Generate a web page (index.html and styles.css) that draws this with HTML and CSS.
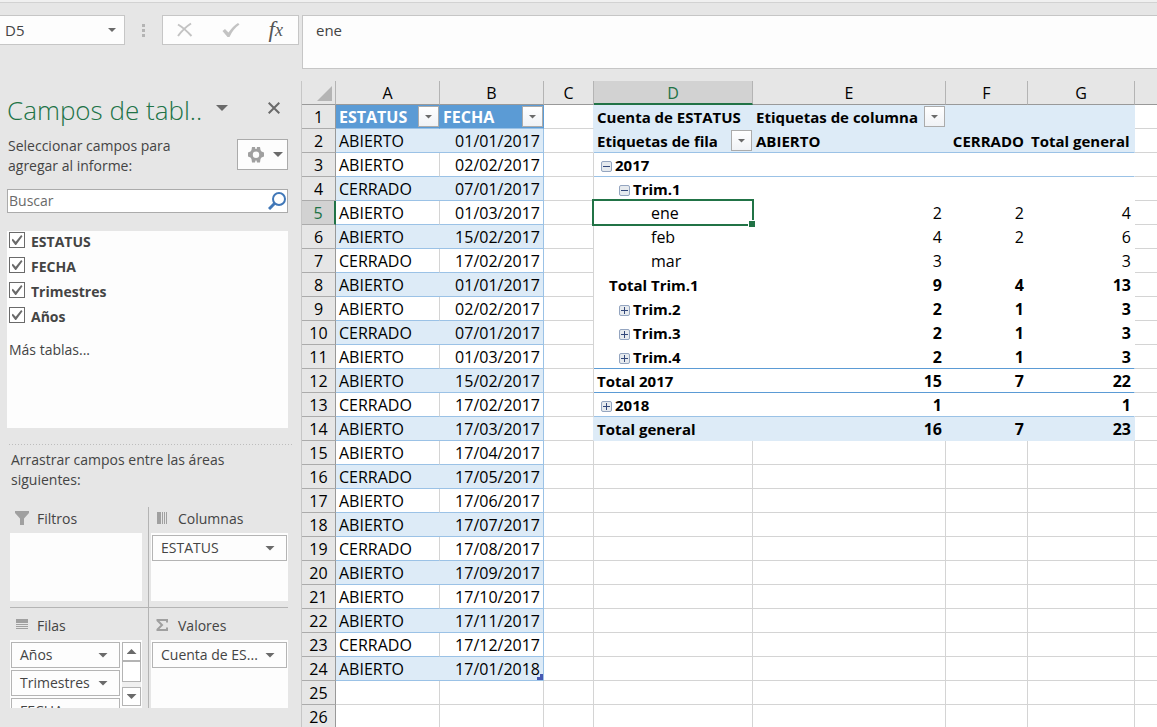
FILE: index.html
```html
<!DOCTYPE html>
<html lang="es">
<head>
<meta charset="utf-8">
<meta name="viewport" content="width=device-width, initial-scale=1">
<title>Tabla dinámica</title>
<link rel="stylesheet" href="styles.css">
</head>
<body>
<header class="formula-bar">
  <div class="name-area">
    <div class="name-box"><input class="name-input" type="text" value="D5" aria-label="Cuadro de nombres"><button class="plain name-drop" aria-label="Nombres"><span class="caret"></span></button></div>
    <div class="grip"><i></i><i></i><i></i></div>
    <div class="formula-tools">
      <button class="plain" aria-label="Cancelar"><svg width="18" height="16" viewBox="0 0 18 16"><path d="M2 2.500Q8 6 15.500 14M15 1.500Q8 6 2 14" fill="none" stroke="#c3c3c3" stroke-width="2"/></svg></button>
      <button class="plain" aria-label="Introducir"><svg width="18" height="16" viewBox="0 0 18 16"><path d="M0.500 9L3 7L6.500 10.500Q11 4 16 1L17.500 2.500Q11 7 7.500 15H5.500Z" fill="#c3c3c3"/></svg></button>
      <button class="plain fx" aria-label="Insertar función"><span class="fx-f">f</span><span class="fx-x">x</span></button>
    </div>
  </div>
  <input class="formula-input" type="text" value="ene" aria-label="Barra de fórmulas">
</header>
<main class="workspace">
  <aside class="pane">
    <div class="pane-head">
      <h1 class="pane-title">Campos de tabl..</h1>
      <button class="plain pane-menu" aria-label="Opciones del panel"><span class="caret caret-lg"></span></button>
      <button class="plain pane-close" aria-label="Cerrar"><svg width="12" height="12" viewBox="0 0 12 12"><path d="M0.700 0.700L11.300 11.300M11.300 0.700L0.700 11.300" stroke="#6a6a6a" stroke-width="2"/></svg></button>
    </div>
    <div class="choose">
      <p class="hint">Seleccionar campos para agregar al informe:</p>
      <button class="tools" aria-label="Herramientas"><svg width="18" height="18" viewBox="0 0 18 18"><path fill="#a0a0a0" fill-rule="evenodd" d="M5 1H8L8.400 3H9.600L10 1H13L13.500 4L14.500 5.500L17 6.500V10.500L14.500 11.500L13.500 13L13 16.500H10L9.500 14.500H8.500L8 16.500H5L4.500 13L3.500 11.500L1 10.500V6.500L3.500 5.500L4.500 4ZM9 5.500A3.200 3.200 0 1 0 9 11.900A3.200 3.200 0 1 0 9 5.500Z"/></svg><span class="caret"></span></button>
    </div>
    <div class="search"><input class="search-input" type="text" placeholder="Buscar" aria-label="Buscar"><svg width="18" height="18" viewBox="0 0 18 18" fill="none" stroke="#4178b8"><circle cx="11" cy="7" r="6" stroke-width="2"/><path d="M7 11L1 17" stroke-width="3"/></svg></div>
    <div class="fields">
      <label class="field"><input class="check" type="checkbox" checked>ESTATUS</label>
      <label class="field"><input class="check" type="checkbox" checked>FECHA</label>
      <label class="field"><input class="check" type="checkbox" checked>Trimestres</label>
      <label class="field"><input class="check" type="checkbox" checked>Años</label>
      <a class="more" href="#">Más tablas...</a>
    </div>
    <p class="hint drag-hint">Arrastrar campos entre las áreas siguientes:</p>
    <div class="areas">
      <section class="area area-left area-top">
        <h2 class="area-title"><svg width="14" height="14" viewBox="0 0 14 14"><path d="M0 0H14V2L9 7.500V14H5V7.500L0 2Z" fill="#a0a0a0"/></svg>Filtros</h2>
        <div class="drop"></div>
      </section>
      <section class="area area-right area-top">
        <h2 class="area-title"><svg width="12" height="12" viewBox="0 0 12 12"><path d="M1 0H5V12H1ZM6 0H7V12H6ZM8 0H9V12H8ZM10 0H11V12H10Z" fill="#a0a0a0"/></svg>Columnas</h2>
        <div class="drop"><button class="chip">ESTATUS<span class="caret"></span></button></div>
      </section>
      <section class="area area-left area-bottom">
        <h2 class="area-title"><svg width="14" height="12" viewBox="0 0 14 12"><path d="M1 0H13V4H1ZM1 5H13V6H1ZM1 7H13V8H1ZM1 9H13V10H1Z" fill="#a0a0a0"/></svg>Filas</h2>
        <div class="drop drop-scroll">
          <div class="chips">
            <button class="chip">Años<span class="caret"></span></button>
            <button class="chip">Trimestres<span class="caret"></span></button>
            <button class="chip">FECHA<span class="caret"></span></button>
          </div>
          <div class="scroll"><button class="scroll-btn" aria-label="Subir"><span class="caret caret-up"></span></button><div class="thumb"></div><button class="scroll-btn scroll-down" aria-label="Bajar"><span class="caret"></span></button></div>
        </div>
      </section>
      <section class="area area-right area-bottom">
        <h2 class="area-title"><svg width="12" height="12" viewBox="0 0 12 12"><path d="M0.500 1H11V3.500M1 1L6 6L1 11M0.500 11H11V8.500" fill="none" stroke="#a0a0a0" stroke-width="2"/></svg>Valores</h2>
        <div class="drop"><button class="chip">Cuenta de ES...<span class="caret"></span></button></div>
      </section>
    </div>
  </aside>
  <div class="sheet">
    <table class="grid">
      <colgroup><col class="w-n"><col class="w-ab"><col class="w-ab"><col class="w-c"><col class="w-d"><col class="w-e"><col class="w-f"><col class="w-g"><col></colgroup>
      <thead><tr><th class="corner"><svg width="17" height="17" viewBox="0 0 17 17"><path d="M16 1V16H1Z" fill="#b4b4b4"/></svg></th><th>A</th><th>B</th><th>C</th><th class="active-col">D</th><th>E</th><th>F</th><th>G</th><th></th></tr></thead>
      <tbody>
        <tr class="t-head p-fill"><th scope="row">1</th><td><div class="cell">ESTATUS<button class="filter" aria-label="Filtrar ESTATUS"><span class="caret caret-sm"></span></button></div></td><td><div class="cell">FECHA<button class="filter" aria-label="Filtrar FECHA"><span class="caret caret-sm"></span></button></div></td><td></td><td>Cuenta de ESTATUS</td><td class="text"><div class="cell">Etiquetas de columna<button class="filter" aria-label="Filtrar columnas"><span class="caret caret-sm"></span></button></div></td><td></td><td></td><td></td></tr>
        <tr class="band p-fill line"><th scope="row">2</th><td>ABIERTO</td><td>01/01/2017</td><td></td><td><div class="cell">Etiquetas de fila<button class="filter" aria-label="Filtrar filas"><span class="caret caret-sm"></span></button></div></td><td class="text">ABIERTO</td><td>CERRADO</td><td class="caption">Total general</td><td></td></tr>
        <tr class="data p line bold"><th scope="row">3</th><td>ABIERTO</td><td>02/02/2017</td><td></td><td class="lv0"><button class="toggle minus" aria-label="Contraer"></button>2017</td><td></td><td></td><td></td><td></td></tr>
        <tr class="band p bold"><th scope="row">4</th><td>CERRADO</td><td>07/01/2017</td><td></td><td class="lv1"><button class="toggle minus" aria-label="Contraer"></button>Trim.1</td><td></td><td></td><td></td><td></td></tr>
        <tr class="data p active-row"><th scope="row">5</th><td>ABIERTO</td><td>01/03/2017</td><td></td><td class="lv2 selected">ene</td><td>2</td><td>2</td><td>4</td><td></td></tr>
        <tr class="band p"><th scope="row">6</th><td>ABIERTO</td><td>15/02/2017</td><td></td><td class="lv2">feb</td><td>4</td><td>2</td><td>6</td><td></td></tr>
        <tr class="data p"><th scope="row">7</th><td>CERRADO</td><td>17/02/2017</td><td></td><td class="lv2">mar</td><td>3</td><td></td><td>3</td><td></td></tr>
        <tr class="band p bold"><th scope="row">8</th><td>ABIERTO</td><td>01/01/2017</td><td></td><td class="sub">Total Trim.1</td><td>9</td><td>4</td><td>13</td><td></td></tr>
        <tr class="data p bold"><th scope="row">9</th><td>ABIERTO</td><td>02/02/2017</td><td></td><td class="lv1"><button class="toggle plus" aria-label="Expandir"></button>Trim.2</td><td>2</td><td>1</td><td>3</td><td></td></tr>
        <tr class="band p bold"><th scope="row">10</th><td>CERRADO</td><td>07/01/2017</td><td></td><td class="lv1"><button class="toggle plus" aria-label="Expandir"></button>Trim.3</td><td>2</td><td>1</td><td>3</td><td></td></tr>
        <tr class="data p bold line-strong"><th scope="row">11</th><td>ABIERTO</td><td>01/03/2017</td><td></td><td class="lv1"><button class="toggle plus" aria-label="Expandir"></button>Trim.4</td><td>2</td><td>1</td><td>3</td><td></td></tr>
        <tr class="band p bold line-strong"><th scope="row">12</th><td>ABIERTO</td><td>15/02/2017</td><td></td><td>Total 2017</td><td>15</td><td>7</td><td>22</td><td></td></tr>
        <tr class="data p bold line"><th scope="row">13</th><td>CERRADO</td><td>17/02/2017</td><td></td><td class="lv0"><button class="toggle plus" aria-label="Expandir"></button>2018</td><td>1</td><td></td><td>1</td><td></td></tr>
        <tr class="band p-fill"><th scope="row">14</th><td>ABIERTO</td><td>17/03/2017</td><td></td><td>Total general</td><td>16</td><td>7</td><td>23</td><td></td></tr>
        <tr class="data"><th scope="row">15</th><td>ABIERTO</td><td>17/04/2017</td><td></td><td></td><td></td><td></td><td></td><td></td></tr>
        <tr class="band"><th scope="row">16</th><td>CERRADO</td><td>17/05/2017</td><td></td><td></td><td></td><td></td><td></td><td></td></tr>
        <tr class="data"><th scope="row">17</th><td>ABIERTO</td><td>17/06/2017</td><td></td><td></td><td></td><td></td><td></td><td></td></tr>
        <tr class="band"><th scope="row">18</th><td>ABIERTO</td><td>17/07/2017</td><td></td><td></td><td></td><td></td><td></td><td></td></tr>
        <tr class="data"><th scope="row">19</th><td>CERRADO</td><td>17/08/2017</td><td></td><td></td><td></td><td></td><td></td><td></td></tr>
        <tr class="band"><th scope="row">20</th><td>ABIERTO</td><td>17/09/2017</td><td></td><td></td><td></td><td></td><td></td><td></td></tr>
        <tr class="data"><th scope="row">21</th><td>ABIERTO</td><td>17/10/2017</td><td></td><td></td><td></td><td></td><td></td><td></td></tr>
        <tr class="band"><th scope="row">22</th><td>ABIERTO</td><td>17/11/2017</td><td></td><td></td><td></td><td></td><td></td><td></td></tr>
        <tr class="data"><th scope="row">23</th><td>CERRADO</td><td>17/12/2017</td><td></td><td></td><td></td><td></td><td></td><td></td></tr>
        <tr class="band"><th scope="row">24</th><td>ABIERTO</td><td class="table-end">17/01/2018</td><td></td><td></td><td></td><td></td><td></td><td></td></tr>
        <tr><th scope="row">25</th><td></td><td></td><td></td><td></td><td></td><td></td><td></td><td></td></tr>
        <tr><th scope="row">26</th><td></td><td></td><td></td><td></td><td></td><td></td><td></td><td></td></tr>
      </tbody>
    </table>
  </div>
</main>
</body>
</html>
```

FILE: styles.css
```css
:root {
  --chrome: #e6e6e6;
  --edge: #c6c6c6;
  --field: #fdfdfd;
  --text: #444;
  --green: #217346;
  --fill: #ddebf7;
  --blue-line: #9bc2e6;
  --blue: #5b9bd5;
  --gridline: #d4d4d4;
}

* { box-sizing: border-box; }

body {
  margin: 0;
  height: 100vh;
  overflow: hidden;
  display: flex;
  flex-direction: column;
  background: var(--chrome);
  color: var(--text);
  font: 14px/20px "Open Sans", "Noto Sans", sans-serif;
}

button, input { font: inherit; color: inherit; }
button { padding: 0; }
p, h1, h2 { margin: 0; font-weight: 400; }
svg { display: block; flex: none; }

.plain {
  border: 0;
  background: none;
  display: flex;
  align-items: center;
  justify-content: center;
}

.caret {
  flex: none;
  width: 10px;
  height: 5px;
  background: #6a6a6a;
  clip-path: polygon(0 0, 100% 0, 50% 100%);
}
.caret-lg { width: 12px; height: 6px; }
.caret-sm { width: 8px; height: 4px; }
.caret-up { clip-path: polygon(50% 0, 100% 100%, 0 100%); }

/* Formula bar */
.formula-bar {
  flex: none;
  display: flex;
  align-items: flex-start;
  height: 81px;
  padding-top: 12px;
  border-top: 2px solid #f0f0f0;
  box-shadow: inset 0 1px #d2d2d2;
  font-size: 15px;
}
.name-area { flex: none; display: flex; width: 302px; padding: 1px 3px 0 0; }
.name-box {
  display: flex;
  width: 125px;
  height: 30px;
  background: var(--field);
  border: 1px solid var(--edge);
  border-left: 0;
}
.name-input { flex: 1; min-width: 0; border: 0; background: none; padding: 0 5px; }
.name-drop { width: 24px; }
.name-drop .caret { width: 8px; height: 4px; }
.grip {
  flex: 1;
  display: flex;
  flex-direction: column;
  align-items: center;
  justify-content: center;
  gap: 2px;
}
.grip i { width: 3px; height: 3px; background: #b4b4b4; }
.formula-tools {
  display: flex;
  align-items: center;
  justify-content: space-between;
  width: 137px;
  height: 30px;
  padding: 0 15px 0 13px;
  background: var(--field);
  border: 1px solid var(--edge);
}
.fx { font: italic 400 23px/20px "Liberation Serif", serif; color: #555; }
.fx-x { font-size: 18px; }
.formula-input {
  flex: 1;
  min-width: 0;
  height: 54px;
  margin-top: 1px;
  padding: 0 13px 24px;
  background: var(--field);
  border: 1px solid var(--edge);
  border-right: 0;
}

.workspace { flex: 1; min-height: 0; display: flex; }

/* Field pane */
.pane { flex: none; width: 301px; padding: 10px 13px 0 7px; }
.pane-head { display: flex; align-items: center; height: 38px; }
.pane-title {
  flex: 1;
  font-size: 26px;
  line-height: 38px;
  font-weight: 300;
  color: var(--green);
  white-space: nowrap;
}
.pane-menu { width: 20px; height: 20px; margin-bottom: 4px; }
.pane-close { width: 28px; height: 20px; margin: 0 0 4px 28px; }
.choose {
  display: flex;
  justify-content: space-between;
  align-items: flex-start;
  padding: 7px 0 0 1px;
}
.hint { width: 190px; }
.tools {
  display: flex;
  align-items: center;
  justify-content: space-between;
  width: 51px;
  height: 31px;
  margin-top: 3px;
  padding: 0 4px 0 9px;
  background: var(--field);
  border: 1px solid #ababab;
}
.search {
  display: flex;
  align-items: center;
  height: 24px;
  margin-top: 13px;
  padding: 0 1px;
  background: #fff;
  border: 1px solid #ababab;
}
.search-input { flex: 1; min-width: 0; height: 20px; padding: 0; border: 0; background: none; outline: 0; }
.search-input::placeholder { color: #6a6a6a; opacity: 1; }
.fields {
  height: 197px;
  margin-top: 18px;
  padding: 0 2px;
  background: var(--field);
}
.field {
  display: flex;
  align-items: center;
  gap: 6px;
  height: 25px;
  padding-bottom: 4px;
  font-weight: 700;
  line-height: 20px;
}
.check {
  appearance: none;
  display: grid;
  place-items: center;
  width: 16px;
  height: 16px;
  margin: 0 0 3px;
  border: 1px solid #6a6a6a;
  background: #fff;
}
.check:checked::after {
  content: "";
  width: 11px;
  height: 10px;
  background: #6a6a6a;
  clip-path: polygon(0 50%, 12% 38%, 38% 68%, 88% 0, 100% 12%, 42% 100%, 34% 100%);
}
.more { display: block; margin-top: 9px; color: inherit; text-decoration: none; }
.drag-hint {
  width: auto;
  margin: 16px -5px 0 2px;
  padding: 6px 45px 0 2px;
  background: repeating-linear-gradient(90deg, #bdbdbd 0 1px, transparent 1px 3px) top / 100% 1px no-repeat;
}
.areas { display: grid; grid-template-columns: 139px 1fr; margin: 17px 0 0 3px; }
.area { min-width: 0; }
.area-left { padding-right: 6px; border-right: 1px solid #b4b4b4; }
.area-right { padding-left: 2px; }
.area-top { padding-bottom: 6px; border-bottom: 1px solid #b4b4b4; }
.area-bottom { padding-top: 6px; }
.area-title { display: flex; align-items: center; gap: 8px; height: 26px; padding: 0 5px 2px; font-size: 14px; }
.area-title svg { margin-bottom: 2px; }
.area-right .area-title { gap: 10px; }
.drop { height: 68px; padding: 2px 1px 0; overflow: hidden; background: var(--field); }
.drop-scroll { display: flex; justify-content: space-between; }
.chips { width: 109px; }
.chip {
  display: flex;
  align-items: center;
  justify-content: space-between;
  width: 100%;
  height: 26px;
  margin-bottom: 2px;
  padding: 0 11px 0 8px;
  background: var(--field);
  border: 1px solid #b4b4b4;
  white-space: nowrap;
}
.scroll { width: 19px; height: 64px; display: flex; flex-direction: column; background: #f0f0f0; }
.scroll-btn, .thumb {
  display: grid;
  place-items: center;
  width: 19px;
  height: 19px;
  background: #fff;
  border: 1px solid #b4b4b4;
}
.thumb { height: 21px; }
.scroll-down { margin-top: auto; }

/* Worksheet */
.sheet { flex: 1; min-width: 0; overflow: hidden; border-left: 1px solid var(--edge); }
.grid {
  width: 100%;
  table-layout: fixed;
  border-collapse: separate;
  border-spacing: 0;
  color: #000;
  font: 16px/20px "Open Sans", "Noto Sans", sans-serif;
}
.w-n { width: 34px; }
.w-ab { width: 104px; }
.w-c { width: 50px; }
.w-d { width: 159px; }
.w-e { width: 193px; }
.w-f { width: 82px; }
.w-g { width: 107px; }
.grid th {
  height: 24px;
  padding: 0;
  background: var(--chrome);
  border-right: 1px solid #b4b4b4;
  border-bottom: 1px solid #ababab;
  font-weight: 400;
}
.grid thead th { border-bottom-color: #999; }
.grid tbody th { border-right-color: #999; }
.grid .corner svg { margin: 2px 2px 0 auto; }
.grid .active-col { padding-top: 1px; background: #d2d2d2; color: var(--green); border-bottom: 2px solid var(--green); }
.grid .active-row th { background: #d2d2d2; color: var(--green); border-right: 2px solid var(--green); }
.grid td {
  height: 24px;
  padding: 0 3px;
  background: #fff;
  border-right: 1px solid var(--gridline);
  border-bottom: 1px solid var(--gridline);
  white-space: nowrap;
  overflow: hidden;
}
.grid td:last-child, .grid th:last-child:not([scope]) { border-right: 0; }
.grid td:nth-child(n+6), .grid td:nth-child(3) { text-align: right; }
.grid td.text { text-align: left; }
.grid td.caption { padding-right: 5px; }
.cell { display: flex; align-items: center; justify-content: space-between; height: 23px; margin-right: -3px; }
.filter {
  display: grid;
  place-items: center;
  flex: none;
  width: 21px;
  height: 21px;
  background: linear-gradient(#fff, #f0f2f6);
  border: 1px solid #ababab;
}

.t-head td:nth-child(-n+3) {
  background: var(--blue);
  border-color: var(--blue) var(--blue) var(--blue-line);
  color: #fff;
  font-weight: 700;
}
.band td:nth-child(-n+3) { background: var(--fill); border-color: var(--fill) var(--fill) var(--blue-line); }
.band td:nth-child(2) { border-right: 0; }
.data td:nth-child(-n+3) { border-bottom-color: var(--blue-line); }
.band td:nth-child(3), .data td:nth-child(3) { border-right-color: var(--blue-line); }

/* Pivot area: no inner gridlines, labels a step smaller than the figures */
.p td:nth-child(n+5):nth-child(-n+8) { border-color: #fff; }
.p td:nth-child(n+5):nth-child(-n+7), .line td:nth-child(n+5):nth-child(-n+7) { border-right: 0; }
.p td:nth-child(6), .p td:nth-child(7), .line td:nth-child(7) { padding-right: 4px; }
.p td:nth-child(8) { border-right-color: var(--gridline); }
.p-fill td:nth-child(n+5):nth-child(-n+8) { background: var(--fill); border-color: var(--fill); font-weight: 700; }
.p-fill td:nth-child(4) { border-right-color: var(--fill); }
.p-fill.line .cell { margin-right: -2px; }
.grid .line td:nth-child(n+5):nth-child(-n+8) { border-bottom-color: var(--blue-line); }
.grid .line-strong td:nth-child(n+5):nth-child(-n+8) { border-bottom-color: var(--blue); }
.bold td:nth-child(n+5) { font-weight: 700; }
.bold td:nth-child(5), .p-fill td:nth-child(5), .p-fill .text, .p-fill .caption, .p-fill.line td:nth-child(7) { font-size: 15px; }

.grid .lv0 { padding-left: 7px; }
.grid .lv1 { padding-left: 25px; }
.grid .lv2 { padding-left: 57px; }
.grid .sub { padding-left: 15px; }
.toggle {
  display: inline-block;
  width: 11px;
  height: 11px;
  margin-right: 3px;
  border: 1px solid #94a5c0;
  border-radius: 2px;
  background: linear-gradient(#33487a, #33487a) center / 7px 1px no-repeat, #e6eaee;
}
.plus {
  background: linear-gradient(#33487a, #33487a) center / 7px 1px no-repeat, linear-gradient(#33487a, #33487a) center / 1px 7px no-repeat, #e6eaee;
}

/* Cell selection frame and its fill handle */
.grid .selected { position: relative; overflow: visible; }
.selected::before {
  content: "";
  position: absolute;
  inset: -2px -1px -2px -2px;
  border: 2px solid var(--green);
}
.selected::after {
  content: "";
  position: absolute;
  right: -2px;
  bottom: -3px;
  width: 6px;
  height: 6px;
  background: var(--green);
  border: solid #fff;
  border-width: 1px 0 0 1px;
}
.grid .table-end { position: relative; }
.table-end::after {
  content: "";
  position: absolute;
  right: 0;
  bottom: 0;
  width: 6px;
  height: 6px;
  background: #4759b2;
  clip-path: polygon(50% 0, 100% 0, 100% 100%, 0 100%, 0 50%, 50% 50%);
}
```
